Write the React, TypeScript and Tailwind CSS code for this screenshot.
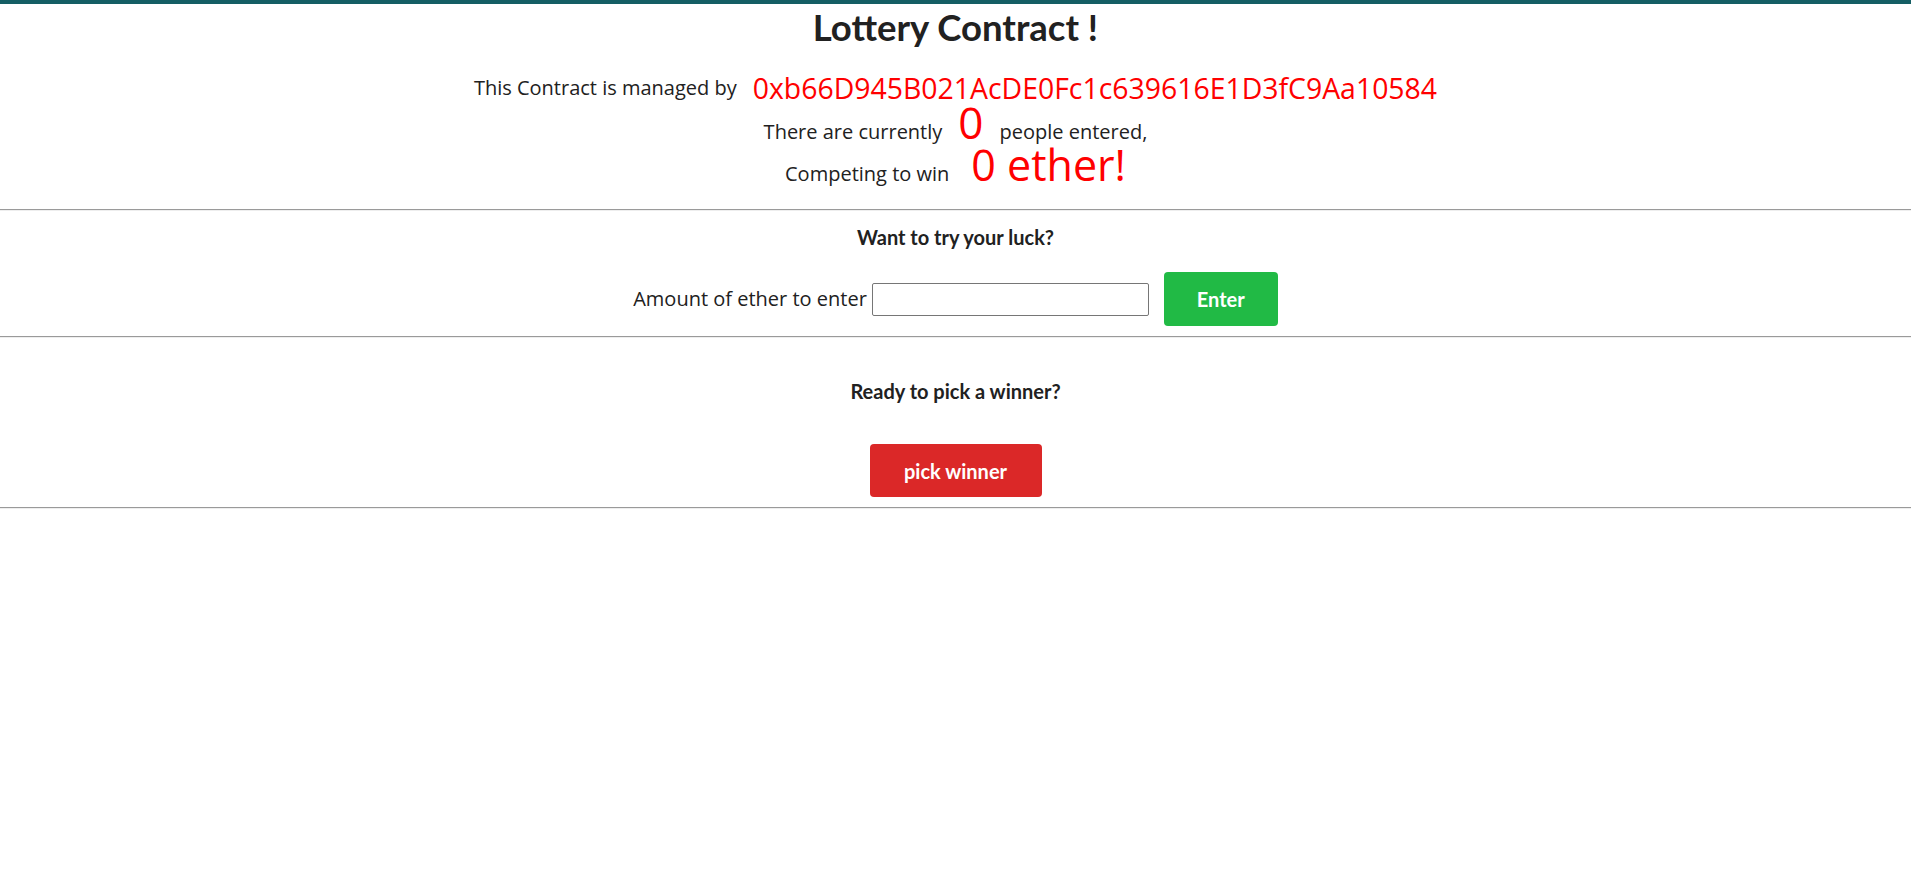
const body = "font-['Open_Sans',sans-serif] text-[#212121]"
const lato = "font-['Lato',sans-serif]"

const Rule = () => (
  <hr className="border-0 border-t border-b border-t-[#9a9a9a] border-b-[#eeeeee] h-[2px]" />
)

const Stat = ({ label, value, tail, size }: { label: string; value: string; tail?: string; size: string }) => (
  <div className="flex items-baseline justify-center gap-4">
    <span className="text-[20px]">{label}</span>
    <span className={`text-[#ff0000] ${size}`}>{value}</span>
    {tail && <span className="text-[20px]">{tail}</span>}
  </div>
)

export default function App() {
  return (
    <div className={`min-h-screen bg-white ${body}`}>
      <div className="h-1 bg-[#155e64]" />
      <h1 className={`${lato} text-center text-[36.5px] font-bold leading-[46px]`}>
        Lottery Contract !
      </h1>

      <div className="flex flex-col items-center pb-[21px] pt-[20px]">
        <div className="flex h-[36px] items-center justify-center gap-4">
          <span className="text-[20px]">This Contract is managed by</span>
          <span className="text-[28.4px] text-[#ff0000]">0xb66D945B021AcDE0Fc1c639616E1D3fC9Aa10584</span>
        </div>
        <div className="flex h-[38px] items-center">
          <Stat label="There are currently" value="0" tail="people entered," size="text-[44px] leading-[38px]" />
        </div>
        <div className="flex h-[44px] items-center">
          <Stat label="Competing to win" value="0 ether!" size="ml-[6px] text-[43px] leading-[44px]" />
        </div>
      </div>

      <Rule />

      <section className="flex flex-col items-center">
        <h4 className={`${lato} mt-[13px] text-[20px] font-bold leading-[26px]`}>Want to try your luck?</h4>
        <form className="mt-[22px] mb-[10px] flex items-center" onSubmit={(e) => e.preventDefault()}>
          <label className="text-[20px]">Amount of ether to enter</label>
          <input className="ml-[5px] h-[33px] w-[277px] rounded-[2px] border border-[#767676] px-1" />
          <button className={`${lato} ml-[15px] h-[54px] w-[114px] rounded-[4px] bg-[#21ba45] text-[20px] font-bold text-white`}>
            Enter
          </button>
        </form>
      </section>

      <Rule />

      <section className="flex flex-col items-center">
        <h4 className={`${lato} mt-[40px] text-[20px] font-bold leading-[26px]`}>Ready to pick a winner?</h4>
        <button className={`${lato} mt-[40px] mb-[10px] h-[53px] w-[172px] rounded-[4px] bg-[#db2828] text-[20px] font-bold text-white`}>
          pick winner
        </button>
      </section>

      <Rule />
    </div>
  )
}
